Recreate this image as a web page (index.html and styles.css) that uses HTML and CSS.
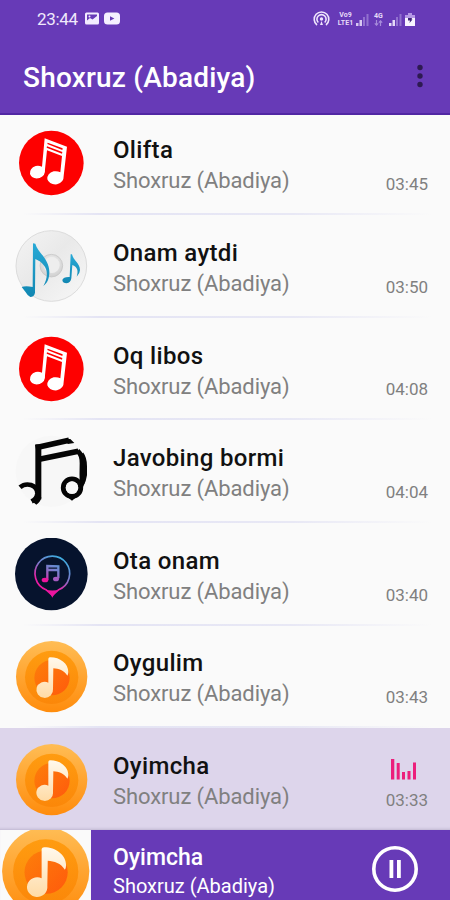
FILE: index.html
```
<!DOCTYPE html>
<html lang="uz">

<head>
    <meta charset="utf-8">
    <title>Shoxruz (Abadiya)</title>
    <meta name="viewport" content="width=device-width, initial-scale=1">
    <link rel="stylesheet" href="styles.css">
</head>

<body>
    <svg class="defs" width="0" height="0">
        <defs>
            <linearGradient id="outer" x1="0" y1="0" x2="0" y2="1">
                <stop offset="0" stop-color="#ffbd55" />
                <stop offset="1" stop-color="#ff8c0c" />
            </linearGradient>
            <linearGradient id="middle" x1="0" y1="0" x2="0" y2="1">
                <stop offset="0" stop-color="#ff9c10" />
                <stop offset="1" stop-color="#fb8709" />
            </linearGradient>
            <linearGradient id="inner" x1="0" y1="0" x2="1" y2="1">
                <stop offset="0" stop-color="#fd7f0a" />
                <stop offset="1" stop-color="#ff5a0c" />
            </linearGradient>
            <linearGradient id="cream" x1="0" y1="0" x2="0" y2="1">
                <stop offset="0" stop-color="#fff9ed" />
                <stop offset="1" stop-color="#ffdba6" />
            </linearGradient>
            <linearGradient id="neon" gradientUnits="userSpaceOnUse" x1="185" y1="90" x2="125" y2="195">
                <stop offset="0" stop-color="#35b4e3" />
                <stop offset="0.45" stop-color="#7e78c9" />
                <stop offset="0.8" stop-color="#ea20a6" />
                <stop offset="1" stop-color="#ed159f" />
            </linearGradient>
            <linearGradient id="blue" x1="0" y1="0" x2="0" y2="1">
                <stop offset="0" stop-color="#28a9d6" />
                <stop offset="1" stop-color="#1187b2" />
            </linearGradient>
            <linearGradient id="disc" x1="0" y1="0" x2="1" y2="1">
                <stop offset="0" stop-color="#f4f4f4" />
                <stop offset="0.45" stop-color="#e9e9e9" />
                <stop offset="1" stop-color="#f8f8f8" />
            </linearGradient>
            <radialGradient id="hub" cx="0.5" cy="0.4" r="0.6">
                <stop offset="0" stop-color="#f8f8f8" />
                <stop offset="1" stop-color="#cfcfcf" />
            </radialGradient>
            <symbol id="art-red" viewBox="45 37 219 219">
                <circle cx="154" cy="145" r="97" fill="#fe0000" />
                <path fill="#fff" fill-rule="evenodd" d="M134 71 L201 96 L191 184 Q192 203 171 209 Q148 211 142 194 Q141 176 161 170 Q172 168 181 173 L186 124 L141 107 L135 164 Q137 183 119 190 Q97 195 90 178 Q88 161 107 154 Q117 152 126 156 Z M143 84 L142 88 L187 106 L188 101 Z M141 95 L140 99 L186 117 L187 112 Z" />
            </symbol>
            <symbol id="art-disc" viewBox="45 36 219 219">
                <circle cx="154" cy="144" r="106" fill="url(#disc)" stroke="#dcdcdc" stroke-width="3" />
                <circle cx="154" cy="143" r="34" fill="url(#hub)" stroke="#c3c3c3" stroke-width="2" />
                <circle cx="155" cy="141" r="24" fill="#eeeeee" />
                <path fill="url(#blue)" d="M99 76 L106 77 C113 104 149 123 148 164 C147 184 142 194 130 204 C143 182 144 158 133 144 C125 133 116 127 106 123 L105 224 Q102 237 91 237 Q82 232 76 221 L65 207 Q77 202 98 207 Z" />
                <path fill="url(#blue)" d="M212 109 L216 109 C219 126 240 136 240 156 Q240 166 230 176 C236 158 232 147 217 141 L214 181 Q212 194 200 196 Q188 196 187 186 Q190 176 209 177 Z" />
            </symbol>
            <symbol id="art-black" viewBox="45 31 219 219">
                <circle cx="154" cy="140" r="107" fill="#f7f7f7" />
                <g fill="none" stroke="#050505">
                    <path stroke-width="18" d="M115 59 V224" />
                    <path stroke-width="17" d="M107 69 L207 47" />
                    <path stroke-width="17" d="M118 104 L235 80" />
                    <path stroke-width="14" d="M233 78 Q246 90 246 115 Q245 150 246 178" />
                    <path stroke-width="14" d="M244 88 Q254 101 254 125 V151 Q250 185 216 219" />
                    <circle cx="216" cy="189" r="26" stroke-width="15" />
                    <path stroke-width="14" d="M60 188 Q74 176 93 181 Q113 188 112 207 Q110 223 95 230" />
                </g>
                <path fill="#050505" d="M199 43 L211 43 L223 55 L203 58 Z M91 225 L124 218 Q123 231 109 240 Z M190 207 L243 204 L216 228 Z" />
                <circle cx="216" cy="189" r="19" fill="#f7f7f7" />
            </symbol>
            <symbol id="art-neon" viewBox="45 38 219 219">
                <circle cx="154" cy="146" r="109" fill="#06132d" />
                <path fill="none" stroke="url(#neon)" stroke-width="5" d="M138 193 A52 52 0 1 1 176 193 L157 210 Z" />
                <path fill="#ed159f" d="M132 191 Q157 200 182 191 Q164 201 157 217 Q151 201 132 191 Z" />
                <path fill="none" stroke="url(#neon)" stroke-width="7" d="M142 164 V122 L175 123 V159 M142 134 H175" />
                <ellipse cx="135" cy="164" rx="10" ry="7" fill="#ed159f" />
                <ellipse cx="168" cy="161" rx="9" ry="7" fill="#a55bc1" />
            </symbol>
            <symbol id="art-orange" viewBox="45 31 219 219">
                <circle cx="155" cy="141" r="107" fill="url(#outer)" />
                <circle cx="155" cy="143" r="80" fill="url(#middle)" />
                <circle cx="156" cy="144" r="53" fill="url(#inner)" />
                <path fill="url(#cream)" d="M145 87 Q146 83 151 83 C180 83 205 102 205 127 Q205 133 202 138 C192 122 176 117 160 116 L159 178 A25 24 0 1 1 145 159 Z" />
            </symbol>
        </defs>
    </svg>

    <header class="app-header">
        <div class="status-bar">
            <span class="status-time">23:44</span>
            <svg class="status-left" width="36" height="14" viewBox="0 0 36 14">
                <path fill="#f2ecff" fill-rule="evenodd" d="M1.5 0.5 H12.5 Q14 0.5 14 2 V11 Q14 12.5 12.5 12.5 H1.5 Q0 12.5 0 11 V2 Q0 0.5 1.5 0.5 Z M2 2.5 V8.5 L5 6 L7.5 7.5 L12 4 V2.5 Z" />
                <circle cx="4.5" cy="4.5" r="1" fill="#f2ecff" />
                <rect x="19" y="0.5" width="16" height="12" rx="3.5" fill="#f5f0ff" />
                <path d="M25 4.2 L29.4 6.5 L25 8.8 Z" fill="#673ab7" />
            </svg>
            <div class="status-right">
                <svg width="17" height="16" viewBox="0 0 17 16">
                    <g fill="none" stroke="#eee5fc" stroke-width="1.6">
                        <path d="M4 14 A7.3 7.3 0 1 1 13 14" />
                        <path d="M5.3 11.5 A4.6 4.6 0 1 1 11.7 11.5" />
                    </g>
                    <circle cx="8.5" cy="8" r="1.7" fill="#eee5fc" />
                    <path d="M7 14 L8.5 10 L10 14 Z" fill="#eee5fc" />
                </svg>
                <div class="net-label volte">
                    <div>Vo9</div>
                    <div>LTE1</div>
                </div>
                <svg class="signal" width="13" height="13" viewBox="0 0 13 13">
                    <path fill="#d8c8f2" d="M0 10 H2.5 V13 H0 Z M3.5 7 H6 V13 H3.5 Z" />
                    <path fill="#9271cf" d="M7 4 H9 V13 H7 Z M10.5 1 H12.5 V13 H10.5 Z" />
                </svg>
                <div class="net-label lte">
                    <div>4G</div>
                    <svg width="9" height="6" viewBox="0 0 9 6">
                        <path fill="none" stroke="#a68bda" stroke-width="1.2" d="M2.5 0 V5 M0.8 3.4 L2.5 5.2 L4.2 3.4 M6.5 6 V1 M4.8 2.6 L6.5 0.8 L8.2 2.6" />
                    </svg>
                </div>
                <svg class="signal" width="13" height="13" viewBox="0 0 13 13">
                    <path fill="#e4d8f7" d="M0 10 H2.5 V13 H0 Z M3.5 7 H6 V13 H3.5 Z" />
                    <path fill="#9271cf" d="M7 4 H9 V13 H7 Z M10.5 1 H12.5 V13 H10.5 Z" />
                </svg>
                <svg class="battery" width="10" height="13" viewBox="0 0 10 13">
                    <path fill="#b497e6" d="M3 0 H7 V2 H10 V5 H0 V2 H3 Z" />
                    <path fill="#f8f4ff" d="M0 5 H10 V13 H0 Z" />
                    <path fill="#3f2379" d="M3 5 H7 L6.5 6.5 H7.5 L4.5 10 L5 7.5 H3 Z" />
                </svg>
            </div>
        </div>
        <div class="toolbar">
            <h1>Shoxruz (Abadiya)</h1>
            <svg class="menu" width="6" height="24" viewBox="0 0 6 24">
                <g fill="#2d1a51">
                    <circle cx="3" cy="3.5" r="2.7" />
                    <circle cx="3" cy="12" r="2.7" />
                    <circle cx="3" cy="20.5" r="2.7" />
                </g>
            </svg>
        </div>
    </header>

    <main class="song-list">
        <div class="song">
            <svg class="art"><use href="#art-red" /></svg>
            <div class="info">
                <div class="title">Olifta</div>
                <div class="artist">Shoxruz (Abadiya)</div>
            </div>
            <div class="time">03:45</div>
        </div>
        <div class="song">
            <svg class="art"><use href="#art-disc" /></svg>
            <div class="info">
                <div class="title">Onam aytdi</div>
                <div class="artist">Shoxruz (Abadiya)</div>
            </div>
            <div class="time">03:50</div>
        </div>
        <div class="song">
            <svg class="art"><use href="#art-red" /></svg>
            <div class="info">
                <div class="title">Oq libos</div>
                <div class="artist">Shoxruz (Abadiya)</div>
            </div>
            <div class="time">04:08</div>
        </div>
        <div class="song">
            <svg class="art"><use href="#art-black" /></svg>
            <div class="info">
                <div class="title">Javobing bormi</div>
                <div class="artist">Shoxruz (Abadiya)</div>
            </div>
            <div class="time">04:04</div>
        </div>
        <div class="song">
            <svg class="art"><use href="#art-neon" /></svg>
            <div class="info">
                <div class="title">Ota onam</div>
                <div class="artist">Shoxruz (Abadiya)</div>
            </div>
            <div class="time">03:40</div>
        </div>
        <div class="song">
            <svg class="art"><use href="#art-orange" /></svg>
            <div class="info">
                <div class="title">Oygulim</div>
                <div class="artist">Shoxruz (Abadiya)</div>
            </div>
            <div class="time">03:43</div>
        </div>
        <div class="song active">
            <svg class="art"><use href="#art-orange" /></svg>
            <div class="info">
                <div class="title">Oyimcha</div>
                <div class="artist">Shoxruz (Abadiya)</div>
            </div>
            <div class="time">
                <svg class="equalizer" width="26" height="21" viewBox="0 0 26 21">
                    <path fill="#ec1f7c" d="M0 0 H3.3 V20.5 H0 Z M5.7 4 H8.7 V20.5 H5.7 Z M11 13 H14 V20.5 H11 Z M16.5 12 H19.5 V20.5 H16.5 Z M22 3.5 H25 V20.5 H22 Z" />
                </svg>
                03:33
            </div>
        </div>
    </main>

    <footer class="player">
        <svg class="player-art" viewBox="43 40.5 223 171.6">
            <rect x="43" y="40" width="223" height="173" fill="#fafafa" />
            <use href="#art-orange" x="45" y="31" width="219" height="219" />
        </svg>
        <div class="player-info">
            <div class="player-title">Oyimcha</div>
            <div class="player-artist">Shoxruz (Abadiya)</div>
        </div>
        <svg class="pause" width="48" height="48" viewBox="0 0 48 48">
            <circle cx="24" cy="24" r="21.2" fill="none" stroke="#fff" stroke-width="3.6" />
            <path fill="#fff" d="M18.5 15 H22.3 V33 H18.5 Z M26 15 H29.8 V33 H26 Z" />
        </svg>
    </footer>
</body>

</html>
```
FILE: styles.css
```
* {
    box-sizing: border-box;
}

body {
    display: flex;
    flex-direction: column;
    width: 450px;
    height: 900px;
    margin: 0;
    overflow: hidden;
    font-family: Roboto, sans-serif;
    background-color: #fafafa;
}

.defs {
    position: absolute;
}

.app-header {
    flex: none;
    height: 115px;
    color: #fff;
    background-color: #673ab7;
    border-bottom: 2px solid #5127a3;
    z-index: 1;
}

.status-bar {
    display: flex;
    align-items: center;
    height: 38px;
    padding: 0 35px 0 37px;
}

.status-time {
    font-size: 17px;
    letter-spacing: -0.3px;
    color: #f0e9fb;
}

.status-left {
    margin-left: 7px;
}

.status-right {
    display: flex;
    align-items: center;
    margin-left: auto;
}

.net-label {
    font-size: 7px;
    font-weight: 700;
    line-height: 8px;
    text-align: center;
    color: #e6dbf8;
}

.net-label svg {
    display: block;
    margin: 0 auto;
}

.volte {
    margin-left: 7px;
    width: 17px;
}

.signal {
    margin-left: 2px;
}

.lte {
    width: 11px;
    margin-left: 4px;
}

.lte + .signal {
    margin-left: 5px;
}

.battery {
    margin-left: 3px;
}

.toolbar {
    display: flex;
    align-items: center;
    justify-content: space-between;
    height: 76px;
    padding: 0 27px 0 23px;
}

.toolbar h1 {
    margin: 2px 0 0;
    font-size: 28px;
    font-weight: 500;
    letter-spacing: 0.2px;
}

.song-list {
    flex: none;
    margin-top: -2.4px;
}

.song {
    display: flex;
    align-items: center;
    height: 102.6px;
    padding: 0 22px 0 15px;
    background: linear-gradient(90deg, #fafafa 5%, #e4e4f4 22%, #e8e8f5 65%, #fafafa 96%) bottom / 100% 2px no-repeat;
}

.song.active {
    height: 101.4px;
    padding-top: 1px;
    background: #ddd5eb;
    box-shadow: inset 0 -4px 3px -3px #bdb5d0;
}

.art {
    flex: none;
    width: 73px;
    height: 73px;
}

.info {
    flex: 1;
    padding: 4px 0 0 25px;
}

.title {
    font-size: 24px;
    font-weight: 500;
    line-height: 31px;
    letter-spacing: 0.33px;
    color: #111;
}

.artist {
    font-size: 22px;
    line-height: 30px;
    letter-spacing: -0.1px;
    color: #808080;
}

.time {
    align-self: flex-end;
    padding-bottom: 21px;
    font-size: 17px;
    line-height: 20px;
    color: #808080;
}

.active .time {
    padding-bottom: 20px;
}

.equalizer {
    display: block;
    margin: 0 0 10px 5px;
}

.player {
    display: flex;
    flex: 1;
    background-color: #673ab7;
    color: #fff;
}

.player-art {
    width: 91px;
    height: 70px;
}

.player-info {
    flex: 1;
    padding: 13px 0 0 22px;
}

.player-title {
    font-size: 23px;
    font-weight: 500;
    line-height: 29px;
}

.player-artist {
    font-size: 20px;
    line-height: 28px;
}

.pause {
    margin: 15px 31px 0 0;
}
```
